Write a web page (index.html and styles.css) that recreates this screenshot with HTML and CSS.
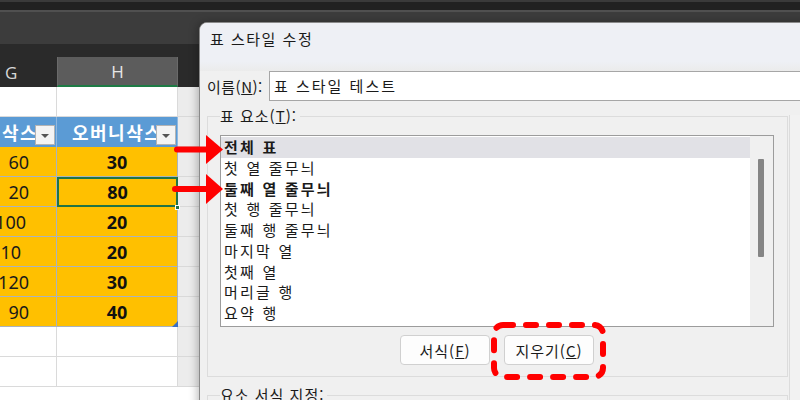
FILE: index.html
```html
<!DOCTYPE html>
<html lang="ko">
<head>
<meta charset="utf-8">
<title>표 스타일 수정</title>
<link rel="stylesheet" href="styles.css">
</head>
<body>
<div class="screen">
  <div class="sheet">
    <div class="bar bar1"></div>
    <div class="bar bar2"></div>
    <div class="bar bar3"></div>
    <div class="bar bar4"></div>
    <div class="row colhead">
      <div class="ch chg">G</div>
      <div class="ch chh">H</div>
      <div class="ch chi"></div>
    </div>
    <div class="row plain">
      <div class="c"></div><div class="c"></div><div class="c ci"></div>
    </div>
    <div class="row thead">
      <div class="th"><span class="tht tg">삭스</span><span class="dd"></span></div>
      <div class="th"><span class="tht th2">오버니삭스</span><span class="dd"></span></div>
      <div class="c ci"></div>
    </div>
    <div class="row data"><div class="d dg">60</div><div class="d dh">30</div><div class="c ci"></div></div>
    <div class="row data"><div class="d dg">20</div><div class="d dh sel">80</div><div class="c ci"></div></div>
    <div class="row data"><div class="d dg n3">100</div><div class="d dh">20</div><div class="c ci"></div></div>
    <div class="row data"><div class="d dg n1">10</div><div class="d dh">20</div><div class="c ci"></div></div>
    <div class="row data"><div class="d dg">120</div><div class="d dh">30</div><div class="c ci"></div></div>
    <div class="row data last"><div class="d dg">90</div><div class="d dh">40</div><div class="c ci"></div></div>
    <div class="row plain">
      <div class="c"></div><div class="c"></div><div class="c ci"></div>
    </div>
    <div class="row plain">
      <div class="c"></div><div class="c"></div><div class="c ci"></div>
    </div>
  </div>

  <div class="handle"></div>
  <div class="resize"></div>

  <div class="dialog">
    <div class="titlebar">표 스타일 수정</div>
    <div class="namerow">
      <span class="namelabel">이름(<u>N</u>):</span>
      <div class="input">표 스타일 테스트</div>
    </div>
    <div class="body">
      <div class="main">
        <fieldset class="group">
          <legend>표 요소(<u>T</u>):</legend>
          <div class="listbox">
            <div class="items">
              <div class="item on b">전체 표</div>
              <div class="item">첫 열 줄무늬</div>
              <div class="item b">둘째 열 줄무늬</div>
              <div class="item">첫 행 줄무늬</div>
              <div class="item">둘째 행 줄무늬</div>
              <div class="item">마지막 열</div>
              <div class="item">첫째 열</div>
              <div class="item">머리글 행</div>
              <div class="item">요약 행</div>
            </div>
            <div class="scroll"><div class="thumb"></div></div>
          </div>
          <div class="buttons">
            <div class="btn">서식(<u>F</u>)</div>
            <div class="btn">지우기(<u>C</u>)</div>
          </div>
        </fieldset>
        <fieldset class="group group2">
          <legend>요소 서식 지정:</legend>
        </fieldset>
      </div>
      <div class="side"></div>
    </div>
  </div>

  <svg class="annot" width="800" height="400" viewBox="0 0 800 400">
    <g fill="#ff0000">
      <rect x="174" y="146.5" width="36" height="6" rx="3"/>
      <polygon points="206,135 223,149.5 206,164"/>
      <rect x="172" y="186" width="38" height="6" rx="3"/>
      <polygon points="206,174 223,189 206,204"/>
    </g>
    <rect x="494" y="325" width="109" height="52" rx="9" fill="none" stroke="#ff0000" stroke-width="6" stroke-linecap="round" stroke-dasharray="10 13"/>
  </svg>
</div>
</body>
</html>
```

FILE: styles.css
```css
* { box-sizing: border-box; }
html, body { margin: 0; padding: 0; background: #ffffff; }
.screen {
  width: 800px;
  height: 400px;
  position: relative;
  overflow: hidden;
  font-family: "Noto Sans CJK KR", "Noto Sans", sans-serif;
}
.sheet { width: 800px; }
.bar { width: 100%; }
.bar1 { height: 10px; background: #212121; border-top: 2px solid #3a3a3a; }
.bar2 { height: 2px; background: #505050; }
.bar3 { height: 32px; background: #3c3c3c; }
.bar4 { height: 13px; background: #2a2a2a; }

.row {
  display: grid;
  grid-template-columns: 57px 121px 1fr;
  height: 30px;
}
.ch {
  background: #2a2a2a;
  color: #d8d8d8;
  font-family: "Open Sans", "Noto Sans", sans-serif;
  font-size: 17px;
  display: flex;
  align-items: center;
}
.chg { padding-left: 5px; }
.chh {
  background: #5c5c5c;
  color: #e6e6e6;
  justify-content: center;
  border-left: 1px solid #6a6a6a;
  border-right: 1px solid #6a6a6a;
  border-bottom: 2px solid #1e7b45;
}
.c {
  background: #ffffff;
  border-right: 1px solid #dadada;
  border-bottom: 1px solid #dadada;
}
.ci { background: #ececec; border-right: none; border-bottom-color: #d9d9d9; }

.th {
  background: #5b9bd5;
  display: flex;
  align-items: flex-end;
  border-right: 1px solid #8fb8e0;
  overflow: hidden;
}
.tht {
  flex: 1;
  min-width: 0;
  overflow: hidden;
  white-space: nowrap;
  color: #ffffff;
  font-weight: 700;
  font-size: 18px;
  line-height: 30px;
  align-self: stretch;
  letter-spacing: 1.5px;
}
.tg { padding-left: 2px; }
.th2 { padding-left: 15px; }
.dd {
  width: 20px;
  height: 20px;
  flex: none;
  margin: 0 1px 2px 0;
  background: #f4f4f4;
  border: 1px solid #b4b4b4;
  position: relative;
  display: flex;
  align-items: center;
  justify-content: center;
}
.dd::after {
  content: "";
  width: 0;
  height: 0;
  border-left: 4px solid transparent;
  border-right: 4px solid transparent;
  border-top: 4px solid #555555;
  margin-top: 2px;
}

.d {
  background: #ffc000;
  border-right: 1px solid #a9b3bf;
  border-bottom: 1px solid #a9b3bf;
  font-family: "Noto Sans", "Open Sans", sans-serif;
  font-size: 18px;
  color: #1a1a1a;
  display: flex;
  align-items: center;
}
.dg { justify-content: flex-end; padding-right: 27px; }
.dg.n3 { padding-right: 30px; }
.dg.n1 { padding-right: 35px; }
.dh { justify-content: center; font-weight: 700; color: #111; }
.sel { border: 2px solid #217346; }

.handle {
  position: absolute;
  left: 175px;
  top: 205px;
  width: 5px;
  height: 5px;
  background: #217346;
  border: 1px solid #ffffff;
}
.resize {
  position: absolute;
  left: 172px;
  top: 321px;
  width: 0;
  height: 0;
  border-left: 6px solid transparent;
  border-bottom: 6px solid #3a6fc4;
}

.dialog {
  position: absolute;
  left: 199px;
  top: 22px;
  width: 640px;
  height: 400px;
  background: #f0f0f0;
  border: 1px solid #8a8a8a;
  border-radius: 8px 0 0 0;
  overflow: hidden;
  box-shadow: -2px 0 8px rgba(0,0,0,0.25);
  color: #1a1a1a;
  font-size: 15px;
}
.titlebar {
  height: 48px;
  background: linear-gradient(#eef0f5 80%, #ebebeb);
  padding: 5px 0 0 10px;
  line-height: 22px;
  letter-spacing: 1.5px;
}
.namerow {
  display: flex;
  align-items: center;
  height: 30px;
}
.namelabel {
  width: 69px;
  padding-left: 7px;
  letter-spacing: 0.5px;
  white-space: nowrap;
}
.input {
  flex: 1;
  height: 30px;
  background: #ffffff;
  border: 1px solid #a6a6a6;
  border-right: none;
  padding-left: 4px;
  line-height: 27px;
  letter-spacing: 2px;
}
.body { display: flex; }
.main { width: 589px; flex: none; }
.side {
  flex: 1;
  margin-top: 14px;
  border-left: 1px solid #dcdcdc;
  background: #f2f2f2;
}
.group {
  margin: 5px 0 0 7px;
  width: 581px;
  border: 1px solid #dcdcdc;
  padding: 0 13px 11px 12px;
  min-width: 0;
}
.group legend {
  padding: 0 3px 0 0;
  margin-left: 0;
  line-height: 20px;
  letter-spacing: 1px;
}
.listbox {
  margin-top: 9px;
  height: 192px;
  background: #ffffff;
  border: 1px solid #9c9c9c;
  display: flex;
}
.items { flex: 1; padding-top: 1px; }
.item {
  height: 20.75px;
  line-height: 20.75px;
  padding-left: 3px;
  letter-spacing: 2.2px;
  white-space: nowrap;
}
.item.on { background: #e1e1e6; }
.item.b { font-weight: 700; }
.scroll {
  width: 23px;
  background: #f0f0f0;
  padding: 23px 0 0 8px;
}
.thumb { width: 6px; height: 98px; background: #858585; border-radius: 1px; }
.buttons {
  display: flex;
  justify-content: center;
  gap: 14px;
  margin-top: 8px;
}
.btn {
  width: 90px;
  height: 30px;
  background: #fdfdfd;
  border: 1px solid #d0d0d0;
  border-radius: 4px;
  display: flex;
  align-items: center;
  justify-content: center;
  letter-spacing: 1px;
}
.group2 { margin-top: 8px; height: 60px; }
.annot { position: absolute; left: 0; top: 0; }
```
